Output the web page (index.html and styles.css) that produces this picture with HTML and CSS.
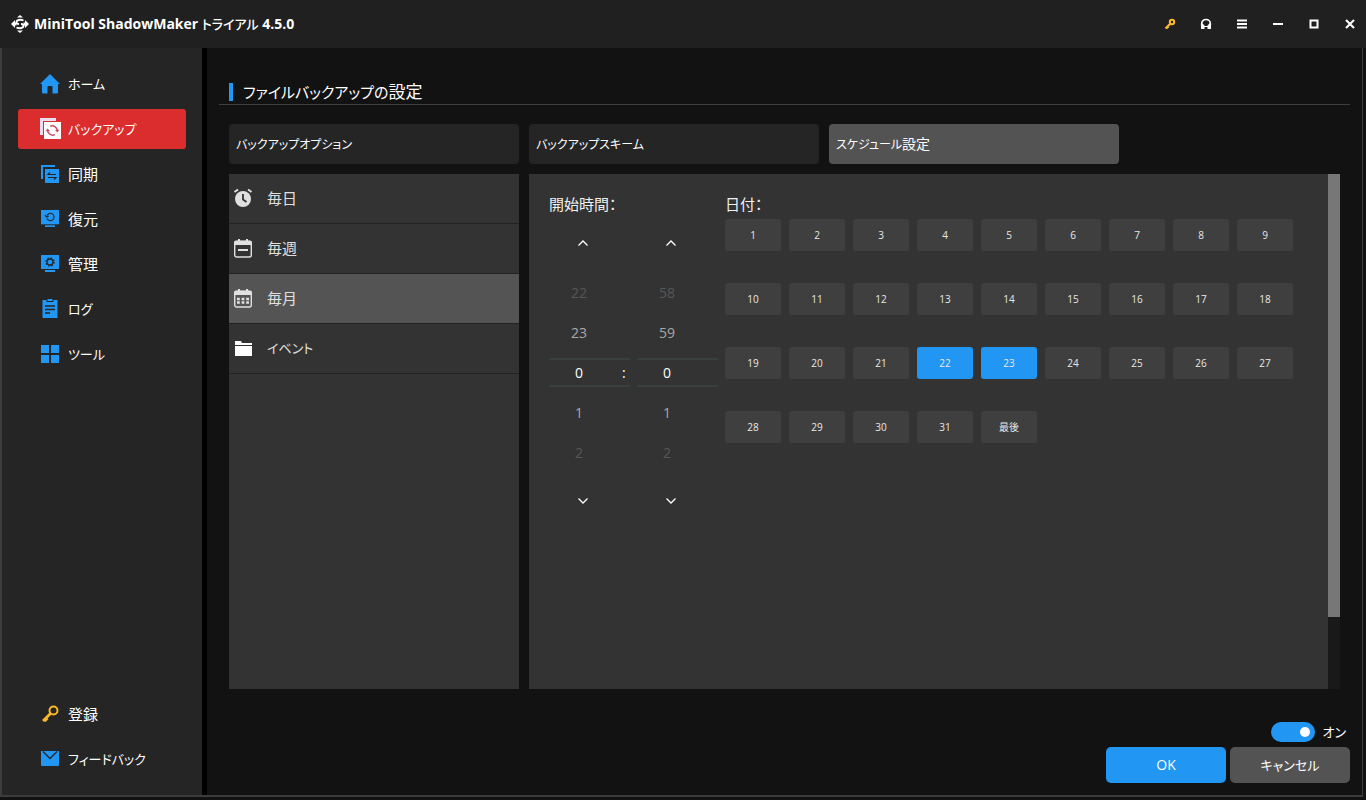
FILE: index.html
```html
<!DOCTYPE html>
<html lang="ja">
<head>
<meta charset="utf-8">
<title>MiniTool ShadowMaker トライアル 4.5.0</title>
<link rel="stylesheet" href="styles.css">
</head>
<body>
<header class="titlebar">
  <svg class="logo" viewBox="0 0 20 20" width="20" height="20"><path d="M7 3.500L10 1l3 2.500zM7 16.500L10 19l3-2.500z" fill="#fff"/><path d="M1 10l4-4v2.500h1.500v3H5V14zM19 10l-4 4v-2.500h-1.500v-3H15V6z" fill="#fff"/><path d="M13.500 6.300C10 5.300 6.500 5.800 6.500 8.200c0 1.200 1 1.800 2.500 1.800M6.500 13.700c3.500 1 7 .5 7-1.900 0-1.200-1-1.800-2.500-1.800" fill="none" stroke="#fff" stroke-width="1.900"/></svg>
  <h1 class="app-title">MiniTool ShadowMaker <span class="edition">トライアル</span> 4.5.0</h1>
  <div class="window-tools">
    <button class="tool" aria-label="登録キー"><svg viewBox="0 0 12 12" width="12" height="12"><circle cx="8" cy="4" r="2.200" fill="none" stroke="#fdb827" stroke-width="2"/><path d="M6.500 5.500L1.500 10.500M2.500 10.300l2-1.800" fill="none" stroke="#fdb827" stroke-width="2.200"/></svg></button>
    <button class="tool" aria-label="サポート"><svg viewBox="0 0 12 12" width="12" height="12"><path d="M1.700 8V5.500a4.300 4 0 0 1 8.600 0V8" fill="none" stroke="#fff" stroke-width="1.600"/><path d="M1 5.500h1.500L4.500 7.500V11H1zM11 5.500H9.500L7.500 7.500V11H11z" fill="#fff"/><path d="M4 8.500h4" stroke="#fff"/></svg></button>
    <button class="tool" aria-label="メニュー"><svg viewBox="0 0 12 12" width="12" height="12"><path d="M1 2.500h10M1 6h10M1 9.500h10" stroke="#fff" stroke-width="2"/></svg></button>
    <button class="tool" aria-label="最小化"><svg viewBox="0 0 12 12" width="12" height="12"><path d="M1 6h10" stroke="#fff" stroke-width="2"/></svg></button>
    <button class="tool" aria-label="最大化"><svg viewBox="0 0 12 12" width="12" height="12"><path d="M2.500 2.500h7v7h-7z" fill="none" stroke="#fff" stroke-width="2"/></svg></button>
    <button class="tool" aria-label="閉じる"><svg viewBox="0 0 12 12" width="12" height="12"><path d="M2 2l8 8M10 2l-8 8" stroke="#fff" stroke-width="2"/></svg></button>
  </div>
</header>
<div class="window">
  <nav class="sidebar">
    <a class="nav-item kana" href="#"><svg viewBox="0 0 20 20" width="20" height="20"><path d="M10 0L20 10H18V18.500a1 1 0 0 1-1 1H12.500V13a1 1 0 0 0-1-1h-3a1 1 0 0 0-1 1v6.500H3a1 1 0 0 1-1-1V10H0z" fill="#2196f3"/></svg>ホーム</a>
    <a class="nav-item kana active" href="#" aria-current="page"><svg viewBox="0 0 22 22" width="22" height="22"><path d="M0 0h16v3H3v14H0z" fill="#e8dff0"/><path d="M4 4h17v17H4z" fill="#fff"/><path d="M10.200 8.400a5 5 0 0 1 7.200 4.100M14.800 16.600a5 5 0 0 1-7.200-4.100" fill="none" stroke="#c94b5f" stroke-width="1.500"/><path d="M15 11.800h4.500l-2.200 2.700zM10 13.200H5.500l2.200-2.700z" fill="#c94b5f"/></svg>バックアップ</a>
    <a class="nav-item" href="#"><svg viewBox="0 0 20 20" width="20" height="20"><path d="M1 1h14v2H3v12H1z" fill="#2196f3"/><path d="M5 5h14v14H5z" fill="#2196f3"/><path d="M16 10.500H8l2-2M8 13.500h8l-2 2" fill="none" stroke="#252525" stroke-width="1.200"/></svg>同期</a>
    <a class="nav-item" href="#"><svg viewBox="0 0 20 20" width="20" height="20"><path d="M1 1h18v15H1zM5 16h10v2H5z" fill="#2196f3"/><path d="M1 15.800h18" stroke="#252525" stroke-width="1"/><path d="M7 6.500a3.700 3.700 0 1 1 0 3M5 6l1.500 2L8.800 7" fill="none" stroke="#252525" stroke-width="1.100"/></svg>復元</a>
    <a class="nav-item" href="#"><svg viewBox="0 0 20 20" width="20" height="20"><path d="M1 1h18v14H1zM5 16h10v2H5z" fill="#2196f3"/><circle cx="10" cy="8" r="3" fill="none" stroke="#252525" stroke-width="1.300"/><circle cx="10" cy="8" r="4.100" fill="none" stroke="#252525" stroke-width="1.200" stroke-dasharray="1.600 1.620"/></svg>管理</a>
    <a class="nav-item kana" href="#"><svg viewBox="0 0 20 20" width="20" height="20"><path d="M2.500 1h4v2h7V1h4v18h-15zM7.500 0h5v2h-5z" fill="#2196f3"/><path d="M5 7h10M5 10.500h10M5 14h5" stroke="#252525" stroke-width="1.300"/></svg>ログ</a>
    <a class="nav-item kana" href="#"><svg viewBox="0 0 20 20" width="20" height="20"><path d="M1 1h8v8H1zM11 1h8v8h-8zM1 11h8v8H1zM11 11h8v8h-8z" fill="#2196f3"/></svg>ツール</a>
    <a class="nav-item nav-bottom" href="#"><svg viewBox="0 0 20 20" width="20" height="20"><circle cx="13.500" cy="6.500" r="4" fill="none" stroke="#fdb827" stroke-width="2"/><path d="M10.500 9.500L3 17M4.500 17l3-2.800" fill="none" stroke="#fdb827" stroke-width="2.800"/></svg>登録</a>
    <a class="nav-item kana" href="#"><svg viewBox="0 0 20 20" width="20" height="20"><path d="M1 2h18v14a1 1 0 0 1-1 1H2a1 1 0 0 1-1-1z" fill="#2196f3"/><path d="M3 2.500l7 7 7-7" fill="none" stroke="#252525" stroke-width="1.300"/></svg>フィードバック</a>
  </nav>
  <main class="content">
    <h2 class="page-title"><span><span class="title-kana">ファイルバックアップの</span>設定</span></h2>
    <div class="body">
      <div class="tabs">
        <button class="tab">バックアップオプション</button>
        <button class="tab">バックアップスキーム</button>
        <button class="tab selected">スケジュール<span class="kanji">設定</span></button>
      </div>
      <div class="panels">
        <div class="modes">
          <button class="mode"><svg viewBox="0 0 20 20" width="20" height="20"><circle cx="10" cy="11" r="8" fill="#e0e0e0"/><path d="M1.500 4L5 1.500M18.500 4L15 1.500" stroke="#e0e0e0" stroke-width="2"/><path d="M10 6v5.500l3.500 2.500" fill="none" stroke="#333" stroke-width="1.800"/></svg>毎日</button>
          <button class="mode"><svg viewBox="0 0 20 20" width="20" height="20"><rect x="1.700" y="3.500" width="16.600" height="15.500" rx="2" fill="none" stroke="#e0e0e0" stroke-width="1.400"/><path d="M1 7V4.500a2 2 0 0 1 2-2h14a2 2 0 0 1 2 2V7zM5 1h2v3H5zM13 1h2v3h-2z" fill="#e0e0e0"/><path d="M5 12h10" stroke="#e0e0e0" stroke-width="2"/></svg>毎週</button>
          <button class="mode selected"><svg viewBox="0 0 20 20" width="20" height="20"><rect x="1.700" y="3.500" width="16.600" height="15.500" rx="2" fill="none" stroke="#e0e0e0" stroke-width="1.400"/><path d="M1 7V4.500a2 2 0 0 1 2-2h14a2 2 0 0 1 2 2V7zM5 1h2v3H5zM13 1h2v3h-2z" fill="#e0e0e0"/><path d="M4 11h12M4 14.500h12" stroke="#e0e0e0" stroke-width="2.400" stroke-dasharray="2.800 1.800"/></svg>毎月</button>
          <button class="mode kana"><svg viewBox="0 0 20 20" width="20" height="20"><path d="M2 3h6l1 2h10v2H2zM2 8h17v10H2z" fill="#fff"/></svg>イベント</button>
        </div>
        <div class="schedule">
          <section class="time">
            <h3 class="label">開始時間：</h3>
            <div class="wheels">
              <div class="wheel">
                <button class="arrow" aria-label="時を戻す"><svg viewBox="0 0 12 8" width="12" height="8"><path d="M1.500 6.500L6 2l4.500 4.500" fill="none" stroke="#fff" stroke-width="1.300"/></svg></button>
                <span class="value far">22</span><span class="value near">23</span>
                <div class="current"><input value="0" aria-label="時"><span>:</span></div>
                <span class="value near">1</span><span class="value far">2</span>
                <button class="arrow down" aria-label="時を進める"><svg viewBox="0 0 12 8" width="12" height="8"><path d="M1.500 1.500L6 6l4.500-4.500" fill="none" stroke="#fff" stroke-width="1.300"/></svg></button>
              </div>
              <div class="wheel">
                <button class="arrow" aria-label="分を戻す"><svg viewBox="0 0 12 8" width="12" height="8"><path d="M1.500 6.500L6 2l4.500 4.500" fill="none" stroke="#fff" stroke-width="1.300"/></svg></button>
                <span class="value far">58</span><span class="value near">59</span>
                <div class="current"><input value="0" aria-label="分"></div>
                <span class="value near">1</span><span class="value far">2</span>
                <button class="arrow down" aria-label="分を進める"><svg viewBox="0 0 12 8" width="12" height="8"><path d="M1.500 1.500L6 6l4.500-4.500" fill="none" stroke="#fff" stroke-width="1.300"/></svg></button>
              </div>
            </div>
          </section>
          <section class="dates">
            <h3 class="label">日付：</h3>
            <div class="days">
              <button class="day">1</button><button class="day">2</button><button class="day">3</button><button class="day">4</button><button class="day">5</button><button class="day">6</button><button class="day">7</button><button class="day">8</button><button class="day">9</button>
              <button class="day">10</button><button class="day">11</button><button class="day">12</button><button class="day">13</button><button class="day">14</button><button class="day">15</button><button class="day">16</button><button class="day">17</button><button class="day">18</button>
              <button class="day">19</button><button class="day">20</button><button class="day">21</button><button class="day picked" aria-pressed="true">22</button><button class="day picked" aria-pressed="true">23</button><button class="day">24</button><button class="day">25</button><button class="day">26</button><button class="day">27</button>
              <button class="day">28</button><button class="day">29</button><button class="day">30</button><button class="day">31</button><button class="day">最後</button>
            </div>
          </section>
          <div class="scrollbar"><div class="thumb"></div></div>
        </div>
      </div>
    </div>
    <footer class="footer">
      <label class="switch kana"><input type="checkbox" checked>オン</label>
      <div class="actions">
        <button class="action primary">OK</button>
        <button class="action kana">キャンセル</button>
      </div>
    </footer>
  </main>
</div>
</body>
</html>
```

FILE: styles.css
```css
* {
  box-sizing: border-box;
}

body {
  margin: 0;
  min-height: 100vh;
  display: flex;
  flex-direction: column;
  padding-bottom: 3px;
  background: #121212;
  color: #fff;
  font: 15px/20px "Open Sans", "Noto Sans CJK JP", sans-serif;
  font-feature-settings: "palt";
}

button,
input {
  margin: 0;
  padding: 0;
  border: 0;
  background: none;
  color: inherit;
  font: inherit;
  font-feature-settings: inherit;
}

h1,
h2,
h3 {
  margin: 0;
}

svg {
  display: block;
  flex: none;
}

.titlebar {
  display: flex;
  align-items: center;
  height: 48px;
  padding: 0 6px 0 10px;
  background: #202020;
}

.app-title {
  margin-left: 4px;
  font-size: 14px;
  font-weight: 700;
}

.edition {
  font-size: 13px;
  font-weight: 500;
}

.window-tools {
  display: flex;
  gap: 16px;
  margin-left: auto;
}

.tool {
  display: grid;
  place-items: center;
  width: 20px;
  height: 20px;
}

.window {
  flex: 1;
  display: flex;
  margin-right: 3px;
  border: solid #3c3c3c;
  border-width: 0 1px 2px 2px;
}

.sidebar {
  display: flex;
  flex-direction: column;
  gap: 5px;
  width: 205px;
  padding: 16px;
  border-right: 5px solid #000;
  background: #252525;
}

.nav-item {
  display: flex;
  align-items: center;
  gap: 8px;
  width: 168px;
  height: 40px;
  padding-left: 22px;
  border-radius: 3px;
  color: #fff;
  text-decoration: none;
}

.nav-item.active {
  gap: 6px;
  background: #db2d2d;
}

.nav-bottom {
  margin-top: auto;
}

.content {
  flex: 1;
  display: flex;
  flex-direction: column;
  padding: 34px 12px 12px;
}

.page-title {
  display: flex;
  align-items: center;
  gap: 10px;
  height: 23px;
  padding: 0 0 3px 10px;
  border-bottom: 1px solid #3f3f3f;
  font-size: 17px;
  font-weight: 400;
}

.title-kana {
  font-size: 15px;
}

.page-title::before {
  content: "";
  width: 4px;
  height: 18px;
  background: #2196f3;
}

.body {
  flex: 1;
  display: flex;
  flex-direction: column;
  gap: 10px;
  padding: 19px 10px 0;
}

.tabs,
.panels {
  display: flex;
  gap: 10px;
}

.tab {
  width: 290px;
  height: 40px;
  padding: 1px 7px 0;
  border-radius: 4px;
  background: #252525;
  font-size: 12px;
  text-align: left;
}

.kanji {
  font-size: 14px;
}

.tab.selected {
  background: #535353;
}

.panels {
  flex: 1;
}

.modes {
  width: 290px;
  background: #333;
}

.mode {
  display: flex;
  align-items: center;
  gap: 14px;
  width: 100%;
  height: 50px;
  padding: 0 0 1px 4px;
  border-bottom: 1px solid #222;
  color: #e0e0e0;
}

.kana {
  font-size: 13px;
}

.mode.selected {
  background: #545454;
}

.schedule {
  flex: 1;
  display: flex;
  padding-left: 20px;
  background: #333;
}

.time,
.dates {
  padding-top: 20px;
}

.label {
  margin-bottom: 5px;
  color: #f0f0f0;
  font-size: 15px;
  font-weight: 400;
}

.wheels {
  display: flex;
  gap: 7px;
  margin-right: 7px;
}

.wheel {
  display: flex;
  flex-direction: column;
  width: 81px;
  font-size: 14px;
}

.arrow {
  display: grid;
  place-items: center;
  width: 68px;
  height: 48px;
  margin-bottom: 6px;
}

.arrow.down {
  margin: 4px 0 0;
}

.value {
  width: 60px;
  line-height: 40px;
  text-align: center;
}

.near {
  color: #a9a9a9;
}

.far {
  color: #575757;
}

.current {
  display: flex;
  align-items: center;
  height: 29px;
  margin: 5px 0 6px;
  border: solid #384040;
  border-width: 2px 0;
}

.current input {
  width: 60px;
  text-align: center;
}

.current span {
  padding-left: 13px;
}

.days {
  display: grid;
  grid-template-columns: repeat(9, 56px);
  gap: 32px 8px;
}

.day {
  height: 32px;
  border-radius: 3px;
  background: #3f3f3f;
  color: #e8e8e8;
  font-size: 10px;
}

.day.picked {
  background: #2196f3;
}

.scrollbar {
  width: 12px;
  margin-left: auto;
  background: #191919;
}

.thumb {
  height: 86%;
  background: #777;
}

.footer {
  display: flex;
  flex-direction: column;
  align-items: flex-end;
  gap: 5px;
  margin-top: 33px;
}

.switch {
  display: flex;
  align-items: center;
  gap: 7px;
  margin-right: 4px;
}

.switch input {
  appearance: none;
  display: flex;
  align-items: center;
  justify-content: flex-end;
  width: 44px;
  height: 20px;
  padding-right: 5px;
  border-radius: 10px;
  background: #2196f3;
}

.switch input::before {
  content: "";
  width: 10px;
  height: 10px;
  border-radius: 50%;
  background: #fff;
}

.actions {
  display: flex;
  gap: 4px;
}

.action {
  width: 120px;
  height: 36px;
  border-radius: 5px;
  background: #535353;
}

.action.primary {
  background: #2196f3;
  font-size: 14px;
}
```
